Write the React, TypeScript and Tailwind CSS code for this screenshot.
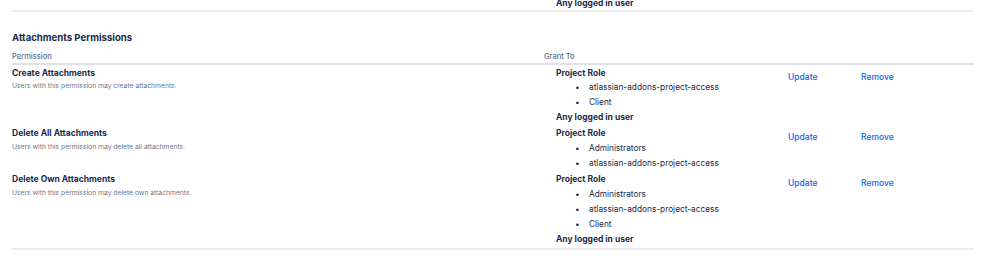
const rows = [
  {
    name: 'Create Attachments',
    desc: 'Users with this permission may create attachments.',
    roles: ['atlassian-addons-project-access', 'Client'],
    anyUser: true,
  },
  {
    name: 'Delete All Attachments',
    desc: 'Users with this permission may delete all attachments.',
    roles: ['Administrators', 'atlassian-addons-project-access'],
    anyUser: false,
  },
  {
    name: 'Delete Own Attachments',
    desc: 'Users with this permission may delete own attachments.',
    roles: ['Administrators', 'atlassian-addons-project-access', 'Client'],
    anyUser: true,
  },
];

export default function App() {
  return (
    <div className="w-[998px] h-[262px] overflow-hidden bg-white font-['Inter','Liberation_Sans',sans-serif] text-[#172b4d]">
      <div className="ml-[12px] w-[962px]">
        <div className="-mt-[4px] border-b-2 border-[#ebecf0] pl-[544px] text-[8.5px] leading-[14px] font-bold">
          Any logged in user
        </div>

        <h2 className="mt-[19px] text-[9.6px] leading-[14px] font-bold">Attachments Permissions</h2>

        <div className="mt-[6px] grid grid-cols-[532px_1fr] border-b-2 border-[#dfe1e6] text-[7.5px] leading-[12px] text-[#626f86] font-medium">
          <div>Permission</div>
          <div>Grant To</div>
        </div>

        <div className="border-b-2 border-[#ebecf0]">
          {rows.map((row) => (
            <div key={row.name} className="grid grid-cols-[534px_242px_73px_1fr] pt-[0.5px] pb-[1.2px]">
              <div>
                <div className="text-[8.5px] leading-[14.8px] font-bold">{row.name}</div>
                <div className="text-[6.75px] leading-[11px] text-[#6b778c]">{row.desc}</div>
              </div>
              <div className="pl-[10px] text-[8.5px] leading-[14.8px]">
                <div className="font-bold">Project Role</div>
                <ul className="pl-[19px] text-[8.3px] text-[#172b4d]">
                  {row.roles.map((r) => (
                    <li key={r} className="flex">
                      <span className="w-[14px]">•</span>
                      <span>{r}</span>
                    </li>
                  ))}
                </ul>
                {row.anyUser && <div className="font-bold">Any logged in user</div>}
              </div>
              <div className="pt-[4px] text-[8.5px] leading-[14.8px] font-medium text-[#0c66e4]">Update</div>
              <div className="pt-[4px] text-[8.5px] leading-[14.8px] font-medium text-[#0c66e4]">Remove</div>
            </div>
          ))}
        </div>
      </div>
    </div>
  );
}
